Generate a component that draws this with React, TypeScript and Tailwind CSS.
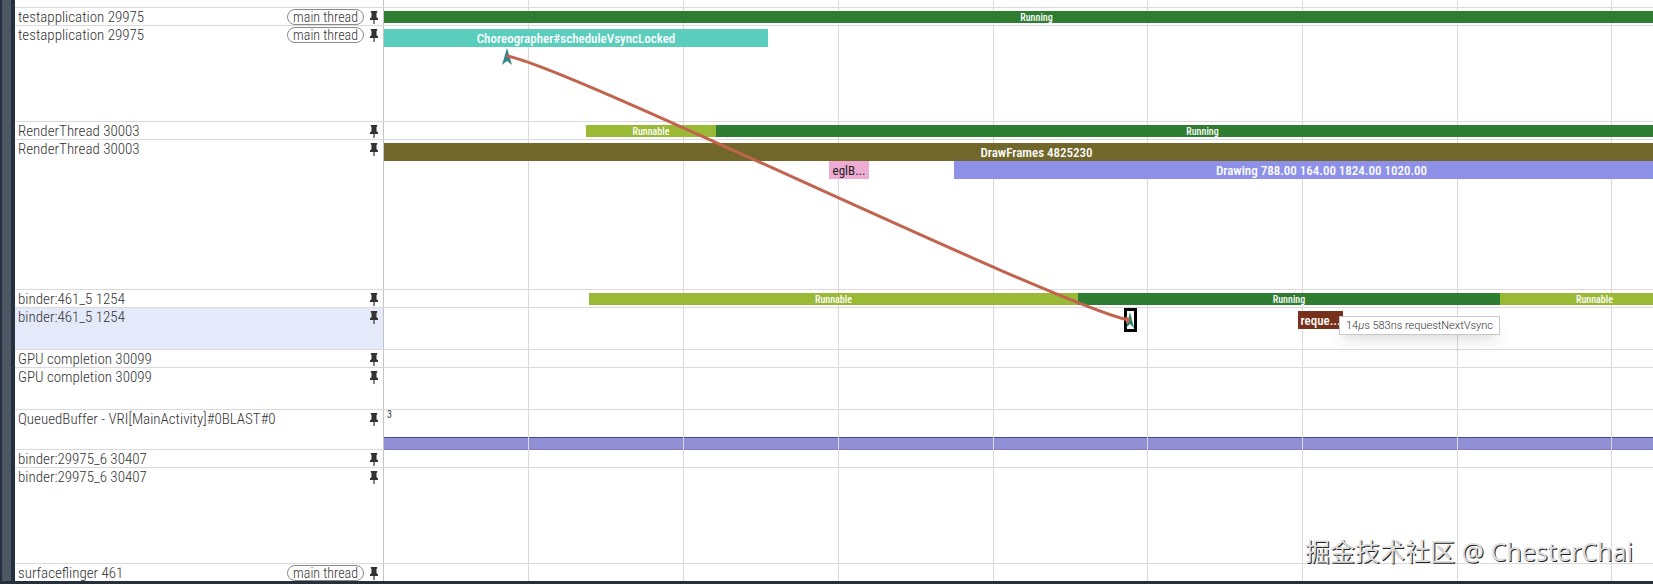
import type { ReactNode } from 'react';

interface Slice {
  name: string;
  start: number;
  end: number;
  color: string;
  selected?: boolean;
}

interface Track {
  id: string;
  title: string;
  height: string;
  kind: 'state' | 'slices' | 'counter' | 'empty';
  mainThread?: boolean;
  highlighted?: boolean;
  rows?: Slice[][];
}

// length of the visible window, in timeline units
const SPAN = 1305;

const GRID = [144, 299, 454, 609, 763, 918, 1073, 1227];

const RUNNING = 'bg-[#2f7d31] font-medium text-white';
const RUNNABLE = 'bg-[#9ab935] font-medium text-white';

const TRACKS: Track[] = [
  {
    id: 'app-state', title: 'testapplication 29975', height: 'h-[18px]', kind: 'state', mainThread: true,
    rows: [[{ name: 'Running', start: 0, end: 1305, color: RUNNING }]],
  },
  {
    id: 'app-slices', title: 'testapplication 29975', height: 'h-24', kind: 'slices', mainThread: true,
    rows: [[{ name: 'Choreographer#scheduleVsyncLocked', start: 0, end: 384, color: 'bg-[#5acdbd] font-medium text-white' }]],
  },
  {
    id: 'render-state', title: 'RenderThread 30003', height: 'h-[18px]', kind: 'state',
    rows: [[
      { name: 'Runnable', start: 202, end: 332, color: RUNNABLE },
      { name: 'Running', start: 332, end: 1305, color: RUNNING },
    ]],
  },
  {
    id: 'render-slices', title: 'RenderThread 30003', height: 'h-[150px]', kind: 'slices',
    rows: [
      [{ name: 'DrawFrames 4825230', start: 0, end: 1305, color: 'bg-[#71672b] font-medium text-white' }],
      [
        { name: 'eglB...', start: 445, end: 485, color: 'bg-[#eeacd4] text-[#222222]' },
        { name: 'Drawing 788.00 164.00 1824.00 1020.00', start: 570, end: 1305, color: 'bg-[#8d91e8] font-medium text-white' },
      ],
    ],
  },
  {
    id: 'binder5-state', title: 'binder:461_5 1254', height: 'h-[18px]', kind: 'state',
    rows: [[
      { name: 'Runnable', start: 205, end: 694, color: RUNNABLE },
      { name: 'Running', start: 694, end: 1116, color: RUNNING },
      { name: 'Runnable', start: 1116, end: 1305, color: RUNNABLE },
    ]],
  },
  {
    id: 'binder5-slices', title: 'binder:461_5 1254', height: 'h-[42px]', kind: 'slices', highlighted: true,
    rows: [[
      { name: '', start: 743, end: 750, color: 'bg-white', selected: true },
      { name: 'reque...', start: 914, end: 959, color: 'bg-[#76301b] font-medium text-white' },
    ]],
  },
  { id: 'gpu-state', title: 'GPU completion 30099', height: 'h-[18px]', kind: 'empty' },
  { id: 'gpu-slices', title: 'GPU completion 30099', height: 'h-[42px]', kind: 'empty' },
  { id: 'buffer', title: 'QueuedBuffer - VRI[MainActivity]#0BLAST#0', height: 'h-10', kind: 'counter' },
  { id: 'binder6-state', title: 'binder:29975_6 30407', height: 'h-[18px]', kind: 'empty' },
  { id: 'binder6-slices', title: 'binder:29975_6 30407', height: 'h-24', kind: 'empty' },
  { id: 'sf-state', title: 'surfaceflinger 461', height: 'h-[18px]', kind: 'empty', mainThread: true },
];

const pct = (n: number) => `${(n / SPAN) * 100}%`;

function PinIcon() {
  return (
    <svg width="8" height="13" viewBox="0 0 8 13" fill="#333333" aria-hidden="true">
      <path d="M.8 0h6.4v1.4l-.7.5v4.3L8 7.3v1.6H0V7.3l1.5-1.1V1.9L.8 1.4z" />
      <path d="M3.4 8.8h1.2V13H3.4z" />
    </svg>
  );
}

function SliceRow({ slices, small }: { slices: Slice[]; small: boolean }) {
  return (
    <div className={small ? 'relative z-10 flex h-3 text-[10px] leading-[13px]' : 'relative z-10 flex h-[18px] text-[13px] leading-5'}>
      {slices.map((s, i) => (
        <div
          key={s.start}
          className={`shrink-0 text-center whitespace-nowrap ${s.color} ${s.selected ? 'outline-3 outline-black' : ''}`}
          style={{ width: pct(s.end - s.start), marginLeft: pct(s.start - (i > 0 ? slices[i - 1].end : 0)) }}
        >
          {s.name}
        </div>
      ))}
    </div>
  );
}

function TrackShell({ title, mainThread, highlighted }: Pick<Track, 'title' | 'mainThread' | 'highlighted'>) {
  return (
    <div className={`flex w-[369px] shrink-0 items-start border-r border-[#c4c4c4] pr-[5px] pl-[3px] ${highlighted ? 'bg-[#e5eafb]' : ''}`}>
      <h1 className="grow truncate text-[15px] leading-[19px] font-light text-[#333333]">{title}</h1>
      {mainThread && (
        <span className="mt-px mr-1.5 rounded-full border border-[#8a8a8a] px-[5px] text-sm leading-[14px] font-light text-[#333333]">
          main thread
        </span>
      )}
      <button type="button" aria-label="Unpin track" className="mt-[3px] shrink-0">
        <PinIcon />
      </button>
    </div>
  );
}

function TrackPanel({ track }: { track: Track }) {
  let content: ReactNode = null;
  if (track.kind === 'counter') {
    content = (
      <div className="flex h-10 flex-col justify-between">
        <span className="pl-[3px] text-[10px] leading-[10px] text-[#444444]">3</span>
        <div className="h-[13px] border-t border-b border-t-[#474a8c] border-b-[#7d7bbd] bg-[#918fd6]" />
      </div>
    );
  } else if (track.rows) {
    content = (
      <div className="pt-[3px]">
        {track.rows.map((row, i) => <SliceRow key={i} slices={row} small={track.kind === 'state'} />)}
      </div>
    );
  }

  return (
    <section className={`flex border-t border-[#dadada] ${track.height}`}>
      <TrackShell title={track.title} mainThread={track.mainThread} highlighted={track.highlighted} />
      <div className="-mr-9 min-w-0 grow">{content}</div>
    </section>
  );
}

function FlowArrow() {
  return (
    <svg className="absolute inset-0 z-20 h-full w-full overflow-visible" aria-hidden="true">
      <path d="M123 48l5 17-5-4-5 4z" fill="#36848a" />
      <path d="M746 312l4 16-4-4-4 4z" fill="#2f806c" />
      <path d="M123 56C183 66 660 300 744 320" fill="none" stroke="#c1644f" strokeWidth="3" />
      <path d="M742 316l5 4-5 4z" fill="#c1644f" />
    </svg>
  );
}

export default function App() {
  return (
    <div className="flex min-h-screen flex-col overflow-hidden bg-[#26303c] font-['Roboto_Condensed',Roboto,'Noto_Sans_CJK_SC',sans-serif]">
      <div className="flex">
        <div className="w-[15px] shrink-0 border-r-4 border-l-2 border-[#262f3d] bg-[#4d5763]" />
        <main className="relative min-w-0 grow overflow-hidden bg-white">
          <div className="flex h-[7px]">
            <div className="w-[369px] border-r border-[#c4c4c4]" />
          </div>
          {TRACKS.map(t => <TrackPanel key={t.id} track={t} />)}

          {/* time grid and flow arrow, laid over the tracks */}
          <div className="pointer-events-none absolute inset-y-0 -right-9 left-[369px]">
            {GRID.map(x => (
              <div key={x} className="absolute inset-y-0 w-px bg-[#dadada]" style={{ left: pct(x) }} />
            ))}
          </div>
          <div className="pointer-events-none absolute inset-y-0 -right-9 left-[369px] z-20">
            <FlowArrow />
            <div
              role="tooltip"
              className="absolute top-[316px] z-30 border border-[#c8c8c8] bg-white px-1.5 text-[11px] leading-[17px] font-light whitespace-nowrap text-[#333333] shadow-lg font-[Roboto,sans-serif]"
              style={{ left: pct(955) }}
            >
              14<i>µ</i>s 583ns requestNextVsync
            </div>
          </div>
          <p className="absolute right-5 bottom-3 z-30 text-[25px] leading-9 text-[#dedede] [text-shadow:1px_1px_0_#222] font-['Noto_Sans','Noto_Sans_CJK_SC',sans-serif]">
            掘金技术社区 @ ChesterChai
          </p>
        </main>
      </div>
    </div>
  );
}
